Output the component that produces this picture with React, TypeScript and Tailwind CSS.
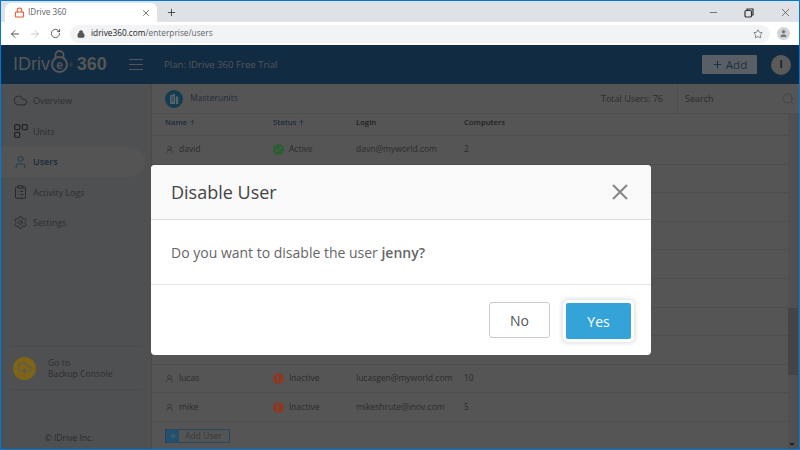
import { Plus, X, ArrowLeft, ArrowRight, RotateCw, Lock, Star, Minus, Search, User, UserRound, Cloud, CloudUpload, ClipboardList, Settings, Check, ArrowUp } from 'lucide-react'

const users = [
  { name: 'david', active: true, login: 'davn@myworld.com', computers: '2' },
  { name: '', active: true, login: '', computers: '' },
  { name: '', active: true, login: '', computers: '' },
  { name: '', active: true, login: '', computers: '' },
  { name: '', active: true, login: '', computers: '' },
  { name: '', active: true, login: '', computers: '' },
  { name: '', active: true, login: '', computers: '' },
  { name: '', active: true, login: '', computers: '' },
  { name: 'lucas', active: false, login: 'lucasgen@myworld.com', computers: '10' },
  { name: 'mike', active: false, login: 'mikeshrute@inov.com', computers: '5' },
]

const UnitsIcon = () => (
  <svg width="14" height="14" viewBox="0 0 14 14" fill="none" stroke="currentColor" strokeWidth="1.3">
    <rect x="0.7" y="0.7" width="5" height="5" rx="1" />
    <rect x="8.3" y="0.7" width="5" height="5" rx="1" />
    <rect x="0.7" y="8.3" width="5" height="5" rx="1" />
  </svg>
)

const BuildingIcon = () => (
  <svg width="18" height="18" viewBox="0 0 18 18">
    <circle cx="9" cy="9" r="9" fill="#143c50" />
    <path d="M5 14V5.5L10 3.5V14Z" fill="#5a6468" />
    <path d="M10.8 6.5H13.2V14H10.8Z" fill="#5a6468" />
    <path d="M6 7H9M6 9H9M6 11H9" stroke="#143c50" strokeWidth="0.8" />
  </svg>
)

const NavItem = ({ icon, label, active }: { icon: React.ReactNode; label: string; active?: boolean }) => (
  <div className={`h-[30.5px] w-[144px] flex items-center pl-3 gap-[5px] text-[9px] ${active ? 'bg-[#545454] rounded-r-full font-semibold text-[#1a2c3c]' : 'text-[#2e2f30]'}`}>
    <span className={`w-[15px] flex justify-center ${active ? 'text-[#163c58]' : 'text-[#232425]'}`}>{icon}</span>
    {label}
  </div>
)

const Sidebar = () => (
  <div className="w-[151px] shrink-0 bg-[#4f5051] border-r border-[#4a4a4a] flex flex-col pt-[1px]">
    <div className="pt-[0.5px]">
      <NavItem label="Overview" icon={<Cloud size={15} strokeWidth={1.3} />} />
      <NavItem label="Units" icon={<UnitsIcon />} />
      <NavItem label="Users" active icon={<User size={16} strokeWidth={1.5} />} />
      <NavItem label="Activity Logs" icon={<ClipboardList size={16} strokeWidth={1.4} />} />
      <NavItem label="Settings" icon={<Settings size={15} strokeWidth={1.2} />} />
    </div>
    <div className="mt-[108px] mx-2 h-[44px] border-y border-[#4a4b4c] flex items-center pl-1 gap-[12px] text-[#2e2f30]">
      <div className="w-[23px] h-[23px] rounded-full bg-[#7d6416] flex items-center justify-center text-[#5a5a5a]">
        <CloudUpload size={15} strokeWidth={2} />
      </div>
      <div className="text-[8.7px] leading-[11.5px] pt-[2px]">Go to<br />Backup Console</div>
    </div>
    <div className="mt-auto mb-[4px] text-center text-[8.5px] font-medium text-[#2b2c2d] pr-[14px]">© IDrive Inc.</div>
  </div>
)

const UserRow = ({ name, active, login, computers }: (typeof users)[number]) => (
  <div className="h-[28.6px] shrink-0 border-b border-[#4e4e4e] flex items-center text-[8.5px] text-[#2c2c2c] pl-[13px]">
    {name && (
      <>
        <div className="w-[108px] flex items-center gap-[5px]">
          <UserRound size={9} strokeWidth={1.5} />
          <span>{name}</span>
        </div>
        <div className="w-[83px] flex items-center gap-[5px]">
          <span className={`w-[11px] h-[11px] rounded-full flex items-center justify-center text-[#555] text-[8px] font-bold ${active ? 'bg-[#2a5f33]' : 'bg-[#8a3a24]'}`}>
            {active ? <Check size={9} strokeWidth={3} /> : '!'}
          </span>
          {active ? 'Active' : 'Inactive'}
        </div>
        <div className="w-[108px]">{login}</div>
        <div>{computers}</div>
      </>
    )}
  </div>
)

const Browser = () => (
  <div className="shrink-0">
    <div className="h-[21px] bg-[#dee1e6] flex items-end pl-[4px] text-[#3c3c3c]">
      <div className="w-[152px] h-[19px] bg-white rounded-t-[6px] flex items-center pl-[9px] pr-[6px]">
        <Lock size={11} className="text-[#e8532f]" strokeWidth={2.2} />
        <span className="ml-[3px] text-[8.2px] text-[#5f6368] flex-1">IDrive 360</span>
        <X size={10} strokeWidth={1.6} className="text-[#333]" />
      </div>
      <Plus size={11} strokeWidth={1.8} className="ml-[9px] mb-[4px] text-[#333]" />
      <div className="ml-auto flex items-center mb-[3px] pr-[7px] gap-[25px]">
        <Minus size={11} strokeWidth={1.4} />
        <svg width="10" height="10" viewBox="0 0 10 10" fill="none" stroke="#333" strokeWidth="1.2">
          <rect x="1" y="2.5" width="6.5" height="6.5" rx="1.3" />
          <path d="M3 2.3V1h6v6H7.7" />
        </svg>
        <X size={13} strokeWidth={1.2} />
      </div>
    </div>
    <div className="h-[23px] bg-white flex items-center pl-[8px] pr-[9px] text-[#5f6368]">
      <ArrowLeft size={12} strokeWidth={1.8} className="text-[#444]" />
      <ArrowRight size={12} strokeWidth={1.6} className="ml-[8px] text-[#bbb]" />
      <RotateCw size={11} strokeWidth={1.8} className="ml-[9px] text-[#444]" />
      <div className="ml-[9px] flex-1 h-[18px] bg-[#f1f3f4] rounded-full flex items-center pl-[7px] pr-[7px] text-[8.3px]">
        <Lock size={8} strokeWidth={2.5} className="text-[#555] mr-[6px]" fill="#555" />
        <span className="text-[#1f2022]">idrive360.com</span>
        <span>/enterprise/users</span>
        <Star size={10} strokeWidth={1.5} className="ml-auto text-[#444]" />
      </div>
      <div className="ml-[7px] w-[13px] h-[13px] rounded-full bg-[#d0d3d7] flex items-center justify-center text-[#777]">
        <User size={9} fill="#777" strokeWidth={1} />
      </div>
    </div>
  </div>
)

const Logo = () => (
  <div className="w-[128px] pl-[12px] flex items-center font-['Liberation_Sans',sans-serif] font-bold text-[#565656] text-[18px]">
    <span className="font-normal">IDriv</span>
    <span className="relative w-[17px] h-[17px] ml-[1px] rounded-full border-2 border-[#565656] flex items-center justify-center text-[12px] leading-none">
      e
      <svg className="absolute left-[1px] -top-[8px]" width="11" height="8" viewBox="0 0 11 8" fill="none" stroke="#565656" strokeWidth="1.8">
        <path d="M1.5 8V5a4 4 0 0 1 8 0v3" />
      </svg>
    </span>
    <span className="text-[5px] self-start mt-[11px] ml-[1px] font-normal">®</span>
    <span className="ml-[4px]">360</span>
  </div>
)

export default function App() {
  return (
    <div className="relative w-[800px] h-[450px] overflow-hidden border border-[#0078d7] flex flex-col font-['Open_Sans',sans-serif] bg-[#555555]">
      <Browser />
      <div className="h-[39px] shrink-0 bg-[#112c42] flex items-center">
        <Logo />
        <div className="w-[14px] h-[11px] border-y border-[#555] flex items-center">
          <div className="w-full h-px bg-[#555]" />
        </div>
        <div className="ml-[21px] pt-[2px] text-[9.6px] text-[#555555]">Plan: IDrive 360 Free Trial</div>
        <div className="ml-auto w-[55px] h-[19px] bg-[#5a5f65] rounded-[1px] flex items-center justify-center gap-[3px] text-[#1e2f3e] text-[11.5px]">
          <Plus size={11} strokeWidth={2.4} className="text-[#16344e]" />
          Add
        </div>
        <div className="ml-[14px] mr-[8px] w-[20px] h-[20px] rounded-full bg-[#5a5a5a] flex items-center justify-center text-[#222] text-[11px] font-bold">I</div>
      </div>
      <div className="flex-1 flex min-h-0">
        <Sidebar />
        <div className="flex-1 flex flex-col min-w-0">
          <div className="h-[30px] shrink-0 border-b border-[#4e4e4e] flex items-center pl-[13px] text-[9px] text-[#2c2c2c]">
            <BuildingIcon />
            <span className="ml-[7px] text-[8.6px] text-[#1f2e3b]">Masterunits</span>
            <span className="ml-auto">Total Users: 76</span>
            <div className="ml-[14px] w-[122px] h-full border-l border-[#4e4e4e] flex items-center pl-[7px] pr-[4px]">
              Search
              <Search size={14} strokeWidth={1.3} className="ml-auto text-[#3f3f3f]" />
            </div>
          </div>
          <div className="flex-1 flex min-h-0">
            <div className="flex-1 min-w-0">
              <div className="h-[22px] border-b border-[#4e4e4e] flex items-center pl-[13px] pb-[3px] text-[7.7px] font-semibold text-[#222]">
                <div className="w-[108px] flex items-center text-[#1a2c3c]">Name <ArrowUp size={7} className="ml-[2px]" /></div>
                <div className="w-[83px] flex items-center text-[#1a2c3c]">Status <ArrowUp size={7} className="ml-[2px]" /></div>
                <div className="w-[108px]">Login</div>
                <div>Computers</div>
              </div>
              {users.map((u, i) => (
                <UserRow key={i} {...u} />
              ))}
              <div className="mt-[7px] ml-[13px] w-[65px] h-[14px] border border-[#24485f] flex items-center text-[8.5px] text-[#2f3a44]">
                <span className="w-[13px] h-full bg-[#24506c] flex items-center justify-center text-[#566a78]"><Plus size={8} /></span>
                <span className="ml-[6px]">Add User</span>
              </div>
            </div>
            <div className="w-[11px] shrink-0 bg-[#505050] relative">
              <div className="absolute left-0 right-[1px] top-[194px] h-[67px] bg-[#444444]" />
              <div className="absolute left-[1px] bottom-[3px] border-x-[3px] border-x-transparent border-t-[3px] border-t-[#222]" />
            </div>
          </div>
        </div>
      </div>
      <div className="absolute left-[150px] top-[164px] w-[500px] h-[190px] bg-white rounded-[4px] flex flex-col">
        <div className="h-[55px] bg-[#f9f9f9] border-b border-[#dddddd] rounded-t-[4px] flex items-center justify-between pl-[20px] pr-[23px]">
          <span className="text-[18px] text-[#444444]">Disable User</span>
          <svg width="16" height="16" viewBox="0 0 16 16" stroke="#8a8a8a" strokeWidth="2.2">
            <path d="M1 1L15 15M15 1L1 15" />
          </svg>
        </div>
        <div className="h-[65px] border-b border-[#e5e5e5] flex items-center pl-[20px] text-[14px] text-[#666666]">
          <span>Do you want to disable the user <b className="font-semibold">jenny?</b></span>
        </div>
        <div className="flex-1 flex items-start justify-end pr-[20px] gap-[16px] pt-[17px]">
          <div className="w-[61px] h-[36px] border border-[#cccccc] rounded-[3px] flex items-center justify-center text-[14px] text-[#555555]">No</div>
          <div className="mt-[1px] w-[65px] h-[36px] bg-[#34a4d8] rounded-[2px] flex items-center justify-center text-[14px] text-white shadow-[0_0_0_3px_#ffffff,0_0_4px_4px_rgba(0,0,0,0.14)]">Yes</div>
        </div>
      </div>
    </div>
  )
}
